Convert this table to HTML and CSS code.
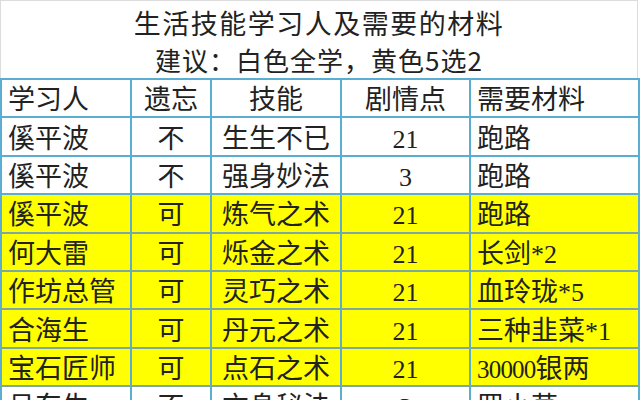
FILE: index.html
```html
<!DOCTYPE html>
<html lang="zh-CN">
<head>
<meta charset="utf-8">
<title>生活技能学习人及需要的材料</title>
<link rel="stylesheet" href="styles.css">
</head>
<body>
<div class="sheet">
  <div class="title">
    <div class="line">生活技能学习人及需要的材料</div>
    <div class="line sub">建议：白色全学，黄色5选2</div>
  </div>
  <table class="grid">
    <colgroup>
      <col class="c1"><col class="c2"><col class="c3"><col class="c4"><col class="c5">
    </colgroup>
    <tr class="head">
      <td class="left">学习人</td><td class="mid">遗忘</td><td class="mid">技能</td><td class="mid">剧情点</td><td class="left">需要材料</td>
    </tr>
    <tr>
      <td class="left">傒平波</td><td class="mid">不</td><td class="mid">生生不已</td><td class="mid"><span class="num">21</span></td><td class="left">跑路</td>
    </tr>
    <tr>
      <td class="left">傒平波</td><td class="mid">不</td><td class="mid">强身妙法</td><td class="mid"><span class="num">3</span></td><td class="left">跑路</td>
    </tr>
    <tr class="y">
      <td class="left">傒平波</td><td class="mid">可</td><td class="mid">炼气之术</td><td class="mid"><span class="num">21</span></td><td class="left">跑路</td>
    </tr>
    <tr class="y">
      <td class="left">何大雷</td><td class="mid">可</td><td class="mid">烁金之术</td><td class="mid"><span class="num">21</span></td><td class="left">长剑<span class="num">*2</span></td>
    </tr>
    <tr class="y">
      <td class="left">作坊总管</td><td class="mid">可</td><td class="mid">灵巧之术</td><td class="mid"><span class="num">21</span></td><td class="left">血玲珑<span class="num">*5</span></td>
    </tr>
    <tr class="y">
      <td class="left">合海生</td><td class="mid">可</td><td class="mid">丹元之术</td><td class="mid"><span class="num">21</span></td><td class="left">三种韭菜<span class="num">*1</span></td>
    </tr>
    <tr class="y">
      <td class="left">宝石匠师</td><td class="mid">可</td><td class="mid">点石之术</td><td class="mid"><span class="num">21</span></td><td class="left"><span class="num tight">30000</span>银两</td>
    </tr>
    <tr>
      <td class="left">吕东生</td><td class="mid">不</td><td class="mid">亦身秘法</td><td class="mid"><span class="num">3</span></td><td class="left">罗小草</td>
    </tr>
  </table>
</div>
</body>
</html>
```
FILE: styles.css
```css
html, body {
  margin: 0;
  padding: 0;
  background: #ffffff;
}
.sheet {
  width: 640px;
  height: 400px;
  overflow: hidden;
  font-family: "Noto Sans CJK SC", "Noto Sans CJK JP", sans-serif;
  color: #222222;
}
.title {
  box-sizing: border-box;
  height: 78px;
  width: 638px;
  padding-top: 3px;
  border-top: 1px solid #dcdcdc;
  border-left: 1px solid #dcdcdc;
  border-right: 1px solid #dcdcdc;
  text-align: center;
  font-size: 27px;
  line-height: 37px;
}
.title .line {
  letter-spacing: 1.5px;
}
.title .sub {
  font-size: 26px;
  letter-spacing: 1px;
}
.grid {
  border-collapse: collapse;
  table-layout: fixed;
  width: 638px;
  font-size: 27px;
}
.c1 { width: 130px; }
.c2 { width: 80px; }
.c3 { width: 130px; }
.c4 { width: 129px; }
.c5 { width: 169px; }
.grid td {
  height: 36.4px;
  padding: 0;
  border: 2px solid #5aaed2;
  line-height: 34px;
  white-space: nowrap;
  overflow: hidden;
}
.grid tr.y td {
  background: #ffff00;
  border-top-color: #7aa9a4;
  border-bottom-color: #7aa9a4;
  border-left-color: #5aaed2;
  border-right-color: #5aaed2;
}
.grid td.left {
  text-align: left;
  padding-left: 6px;
}
.grid td.mid {
  text-align: center;
}
.num {
  font-family: "Liberation Serif", "Noto Sans CJK SC", serif;
  font-size: 26px;
  line-height: 1;
}
.num.tight {
  font-size: 25px;
  letter-spacing: -0.8px;
}
```
